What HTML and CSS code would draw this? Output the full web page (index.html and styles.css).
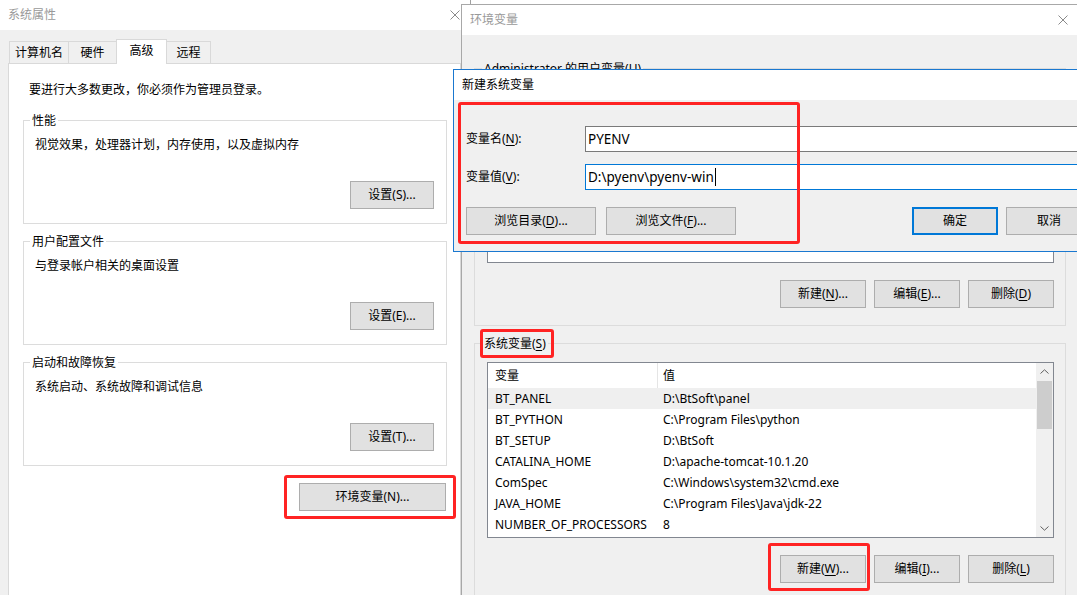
FILE: index.html
```html
<!DOCTYPE html>
<html lang="zh-CN">
<head>
    <title>环境变量</title>
    <meta charset="UTF-8">
    <link rel="stylesheet" href="styles.css">
</head>
<body>
<div class="desktop">

    <!-- 系统属性 -->
    <div class="window sys-window">
        <div class="titlebar">
            <span class="title inactive">系统属性</span>
            <span class="close-btn">
                <svg width="10" height="10" viewBox="0 0 10 10"><path d="M0.5 0.5 L9.5 9.5 M9.5 0.5 L0.5 9.5" stroke="#8a8a8a" stroke-width="1" fill="none"/></svg>
            </span>
        </div>
        <div class="sys-body">
            <div class="tabs">
                <div class="tab">计算机名</div>
                <div class="tab">硬件</div>
                <div class="tab active">高级</div>
                <div class="tab tab-last">远程</div>
            </div>
            <div class="tab-panel">
                <p class="notice">要进行大多数更改，你必须作为管理员登录。</p>

                <div class="group">
                    <div class="group-title">性能</div>
                    <p class="group-text">视觉效果，处理器计划，内存使用，以及虚拟内存</p>
                    <div class="group-actions"><button class="btn btn-set">设置(S)...</button></div>
                </div>

                <div class="group">
                    <div class="group-title">用户配置文件</div>
                    <p class="group-text">与登录帐户相关的桌面设置</p>
                    <div class="group-actions"><button class="btn btn-set">设置(E)...</button></div>
                </div>

                <div class="group">
                    <div class="group-title">启动和故障恢复</div>
                    <p class="group-text">系统启动、系统故障和调试信息</p>
                    <div class="group-actions"><button class="btn btn-set">设置(T)...</button></div>
                </div>

                <div class="panel-actions"><button class="btn btn-env">环境变量(N)...</button></div>
            </div>
        </div>
    </div>

    <div class="window-edge"></div>

    <!-- 环境变量 -->
    <div class="window env-window">
        <div class="titlebar">
            <span class="title inactive">环境变量</span>
            <span class="close-btn">
                <svg width="10" height="10" viewBox="0 0 10 10"><path d="M0.5 0.5 L9.5 9.5 M9.5 0.5 L0.5 9.5" stroke="#8a8a8a" stroke-width="1" fill="none"/></svg>
            </span>
        </div>
        <div class="env-body">
            <div class="group env-group">
                <div class="group-title">Administrator 的用户变量(<u>U</u>)</div>
                <div class="listbox">
                    <div class="list-rows">
                        <div class="list-head"><span class="col-name">变量</span><span class="col-value">值</span></div>
                        <div class="list-row"><span class="col-name">OneDrive</span><span class="col-value">C:\Users\Administrator\OneDrive</span></div>
                        <div class="list-row"><span class="col-name">Path</span><span class="col-value">C:\Users\Administrator\AppData\Local\Microsoft\WindowsApps;</span></div>
                        <div class="list-row"><span class="col-name">TEMP</span><span class="col-value">C:\Users\Administrator\AppData\Local\Temp</span></div>
                        <div class="list-row"><span class="col-name">TMP</span><span class="col-value">C:\Users\Administrator\AppData\Local\Temp</span></div>
                    </div>
                </div>
                <div class="list-actions">
                    <button class="btn btn-list">新建(<u>N</u>)...</button>
                    <button class="btn btn-list">编辑(<u>E</u>)...</button>
                    <button class="btn btn-list">删除(<u>D</u>)</button>
                </div>
            </div>

            <div class="group env-group">
                <div class="group-title">系统变量(<u>S</u>)</div>
                <div class="listbox">
                    <div class="list-rows">
                        <div class="list-head"><span class="col-name">变量</span><span class="col-value">值</span></div>
                        <div class="list-row selected"><span class="col-name">BT_PANEL</span><span class="col-value">D:\BtSoft\panel</span></div>
                        <div class="list-row"><span class="col-name">BT_PYTHON</span><span class="col-value">C:\Program Files\python</span></div>
                        <div class="list-row"><span class="col-name">BT_SETUP</span><span class="col-value">D:\BtSoft</span></div>
                        <div class="list-row"><span class="col-name">CATALINA_HOME</span><span class="col-value">D:\apache-tomcat-10.1.20</span></div>
                        <div class="list-row"><span class="col-name">ComSpec</span><span class="col-value">C:\Windows\system32\cmd.exe</span></div>
                        <div class="list-row"><span class="col-name">JAVA_HOME</span><span class="col-value">C:\Program Files\Java\jdk-22</span></div>
                        <div class="list-row"><span class="col-name">NUMBER_OF_PROCESSORS</span><span class="col-value">8</span></div>
                    </div>
                    <div class="scrollbar">
                        <div class="scroll-arrow">
                            <svg width="9" height="5" viewBox="0 0 9 5"><path d="M0.5 4.5 L4.5 0.8 L8.5 4.5" stroke="#606060" fill="none"/></svg>
                        </div>
                        <div class="scroll-track"><div class="scroll-thumb"></div></div>
                        <div class="scroll-arrow">
                            <svg width="9" height="5" viewBox="0 0 9 5"><path d="M0.5 0.5 L4.5 4.2 L8.5 0.5" stroke="#606060" fill="none"/></svg>
                        </div>
                    </div>
                </div>
                <div class="list-actions">
                    <button class="btn btn-list">新建(<u>W</u>)...</button>
                    <button class="btn btn-list">编辑(<u>I</u>)...</button>
                    <button class="btn btn-list">删除(<u>L</u>)</button>
                </div>
            </div>
        </div>
    </div>

    <!-- 新建系统变量 -->
    <div class="window dialog">
        <div class="titlebar">
            <span class="title">新建系统变量</span>
        </div>
        <div class="dialog-body">
            <div class="field-row">
                <span class="field-label">变量名(<u>N</u>):</span>
                <div class="field">PYENV</div>
            </div>
            <div class="field-row">
                <span class="field-label">变量值(<u>V</u>):</span>
                <div class="field focused">D:\pyenv\pyenv-win<span class="caret"></span></div>
            </div>
            <div class="dialog-actions">
                <button class="btn btn-browse">浏览目录(<u>D</u>)...</button>
                <button class="btn btn-browse">浏览文件(<u>F</u>)...</button>
                <span class="spacer"></span>
                <button class="btn btn-list btn-default">确定</button>
                <button class="btn btn-list">取消</button>
            </div>
        </div>
    </div>

    <!-- 红框标注 -->
    <div class="mark mark-dialog"></div>
    <div class="mark mark-env"></div>
    <div class="mark mark-sys"></div>
    <div class="mark mark-new"></div>
</div>
</body>
</html>
```

FILE: styles.css
```css
* {
    box-sizing: border-box;
}

body {
    margin: 0;
    font-family: "Noto Sans", "Noto Sans CJK SC", sans-serif;
    font-size: 12px;
    line-height: 16px;
    color: #000;
    background: #fff;
}

p {
    margin: 0;
}

u {
    text-underline-offset: 2px;
}

.desktop {
    position: relative;
    width: 1077px;
    height: 595px;
    overflow: hidden;
}

/* окна */
.window {
    position: absolute;
    background: #f0f0f0;
}

.sys-window {
    left: 0;
    top: 0;
    width: 478px;
    height: 640px;
    z-index: 1;
}

.window-edge {
    position: absolute;
    left: 470px;
    top: -40px;
    width: 640px;
    height: 44px;
    border-left: 1px solid #a0a0a0;
    background: #fff;
    z-index: 2;
}

.env-window {
    left: 461px;
    top: 4px;
    width: 626px;
    height: 640px;
    border: 1px solid #a8a8a8;
    z-index: 3;
}

.dialog {
    left: 453px;
    top: 69px;
    width: 652px;
    border: 1px solid #1a78d0;
    z-index: 4;
}

.titlebar {
    height: 30px;
    background: #fff;
    display: flex;
    align-items: center;
    justify-content: space-between;
    padding-left: 8px;
}

.title.inactive {
    color: #999;
}

.close-btn {
    width: 46px;
    height: 30px;
    display: flex;
    align-items: center;
    justify-content: center;
}

/* кнопки */
.btn {
    height: 28px;
    padding: 0;
    background: #e1e1e1;
    border: 1px solid #adadad;
    font: inherit;
    color: #000;
}

.btn-set {
    width: 84px;
}

.btn-env {
    width: 147px;
}

.btn-list {
    width: 86px;
}

.btn-browse {
    width: 130px;
}

.btn-default {
    border: 2px solid #0078d7;
}

/* группы */
.group {
    border: 1px solid #dcdcdc;
    padding: 0 12px 14px 11px;
}

.group-title {
    width: fit-content;
    margin: -8px 0 0 -5px;
    padding: 0 2px;
    background: inherit;
    white-space: nowrap;
}

/* системные свойства */
.sys-body {
    padding: 9px 0 0 8px;
}

.tabs {
    display: flex;
    align-items: flex-end;
    margin-left: 1px;
}

.tab {
    height: 22px;
    min-width: 49px;
    padding: 0 5px;
    border: 1px solid #d9d9d9;
    border-bottom: none;
    display: flex;
    align-items: center;
    justify-content: center;
}

.tab + .tab {
    margin-left: -1px;
}

.tab.active {
    position: relative;
    z-index: 1;
    height: 25px;
    min-width: 51px;
    margin-bottom: -1px;
    padding-bottom: 2px;
    background: #fff;
}

.tab-last {
    min-width: 45px;
}

.tab-panel {
    width: 453px;
    height: 560px;
    border: 1px solid #d9d9d9;
    background: #fff;
    padding: 18px 13px 0 14px;
}

.notice {
    padding-left: 6px;
    margin-bottom: 22px;
}

.tab-panel .group {
    background: #fff;
}

.tab-panel .group + .group {
    margin-top: 17px;
}

.group-text {
    margin-top: 8px;
}

.group-actions {
    display: flex;
    justify-content: flex-end;
    margin-top: 28px;
}

.panel-actions {
    display: flex;
    justify-content: flex-end;
    margin-top: 17px;
    padding-right: 1px;
}

/* переменные среды */
.env-body {
    padding: 33px 0 0 12px;
}

.env-group {
    width: 592px;
    background: #f0f0f0;
    padding: 0 11px 17px 12px;
}

.env-group + .env-group {
    margin-top: 17px;
}

.env-group .group-title {
    margin-bottom: 10px;
}

.listbox {
    display: flex;
    height: 176px;
    border: 1px solid #828790;
    background: #fff;
}

.list-rows {
    flex: 1;
    min-width: 0;
    overflow: hidden;
}

.list-head {
    display: flex;
    height: 25px;
}

.list-head .col-name {
    border-right: 1px solid #e5e5e5;
}

.list-row {
    display: flex;
    height: 21px;
}

.list-row.selected {
    background: #efefef;
}

.col-name {
    width: 170px;
    flex-shrink: 0;
    padding-left: 7px;
    white-space: nowrap;
    overflow: hidden;
    display: flex;
    align-items: center;
}

.col-value {
    flex: 1;
    padding-left: 5px;
    white-space: nowrap;
    overflow: hidden;
    display: flex;
    align-items: center;
}

.scrollbar {
    width: 17px;
    flex-shrink: 0;
    background: #f0f0f0;
    display: flex;
    flex-direction: column;
}

.scroll-arrow {
    height: 17px;
    display: flex;
    align-items: center;
    justify-content: center;
}

.scroll-track {
    flex: 1;
    padding: 1px 1px 0;
}

.scroll-thumb {
    height: 48px;
    background: #cdcdcd;
}

.list-actions {
    display: flex;
    justify-content: flex-end;
    gap: 8px;
    margin-top: 17px;
}

/* новый системный параметр */
.dialog-body {
    padding: 26px 12px 16px 12px;
}

.field-row {
    display: flex;
    align-items: center;
}

.field-row + .field-row {
    margin-top: 12px;
}

.field-label {
    width: 119px;
    flex-shrink: 0;
}

.field {
    flex: 1;
    height: 26px;
    border: 1px solid #7a7a7a;
    background: #fff;
    padding: 0 2px;
    display: flex;
    align-items: center;
    white-space: nowrap;
    font-size: 13.5px;
}

.field.focused {
    border-color: #0078d7;
}

.caret {
    display: inline-block;
    width: 0;
    height: 18px;
    border-left: 1px solid #000;
    margin-left: 1px;
}

.dialog-actions {
    display: flex;
    gap: 10px;
    margin-top: 17px;
}

.dialog-actions .btn-list + .btn-list {
    margin-left: -2px;
}

.spacer {
    flex: 1;
}

/* красные рамки */
.mark {
    position: absolute;
    border: 3px solid #ff2323;
    border-radius: 3px;
    z-index: 10;
}

.mark-dialog {
    left: 458px;
    top: 102px;
    width: 342px;
    height: 142px;
}

.mark-env {
    left: 284px;
    top: 475px;
    width: 172px;
    height: 44px;
}

.mark-sys {
    left: 480px;
    top: 329px;
    width: 74px;
    height: 29px;
}

.mark-new {
    left: 768px;
    top: 543px;
    width: 102px;
    height: 48px;
}
```
